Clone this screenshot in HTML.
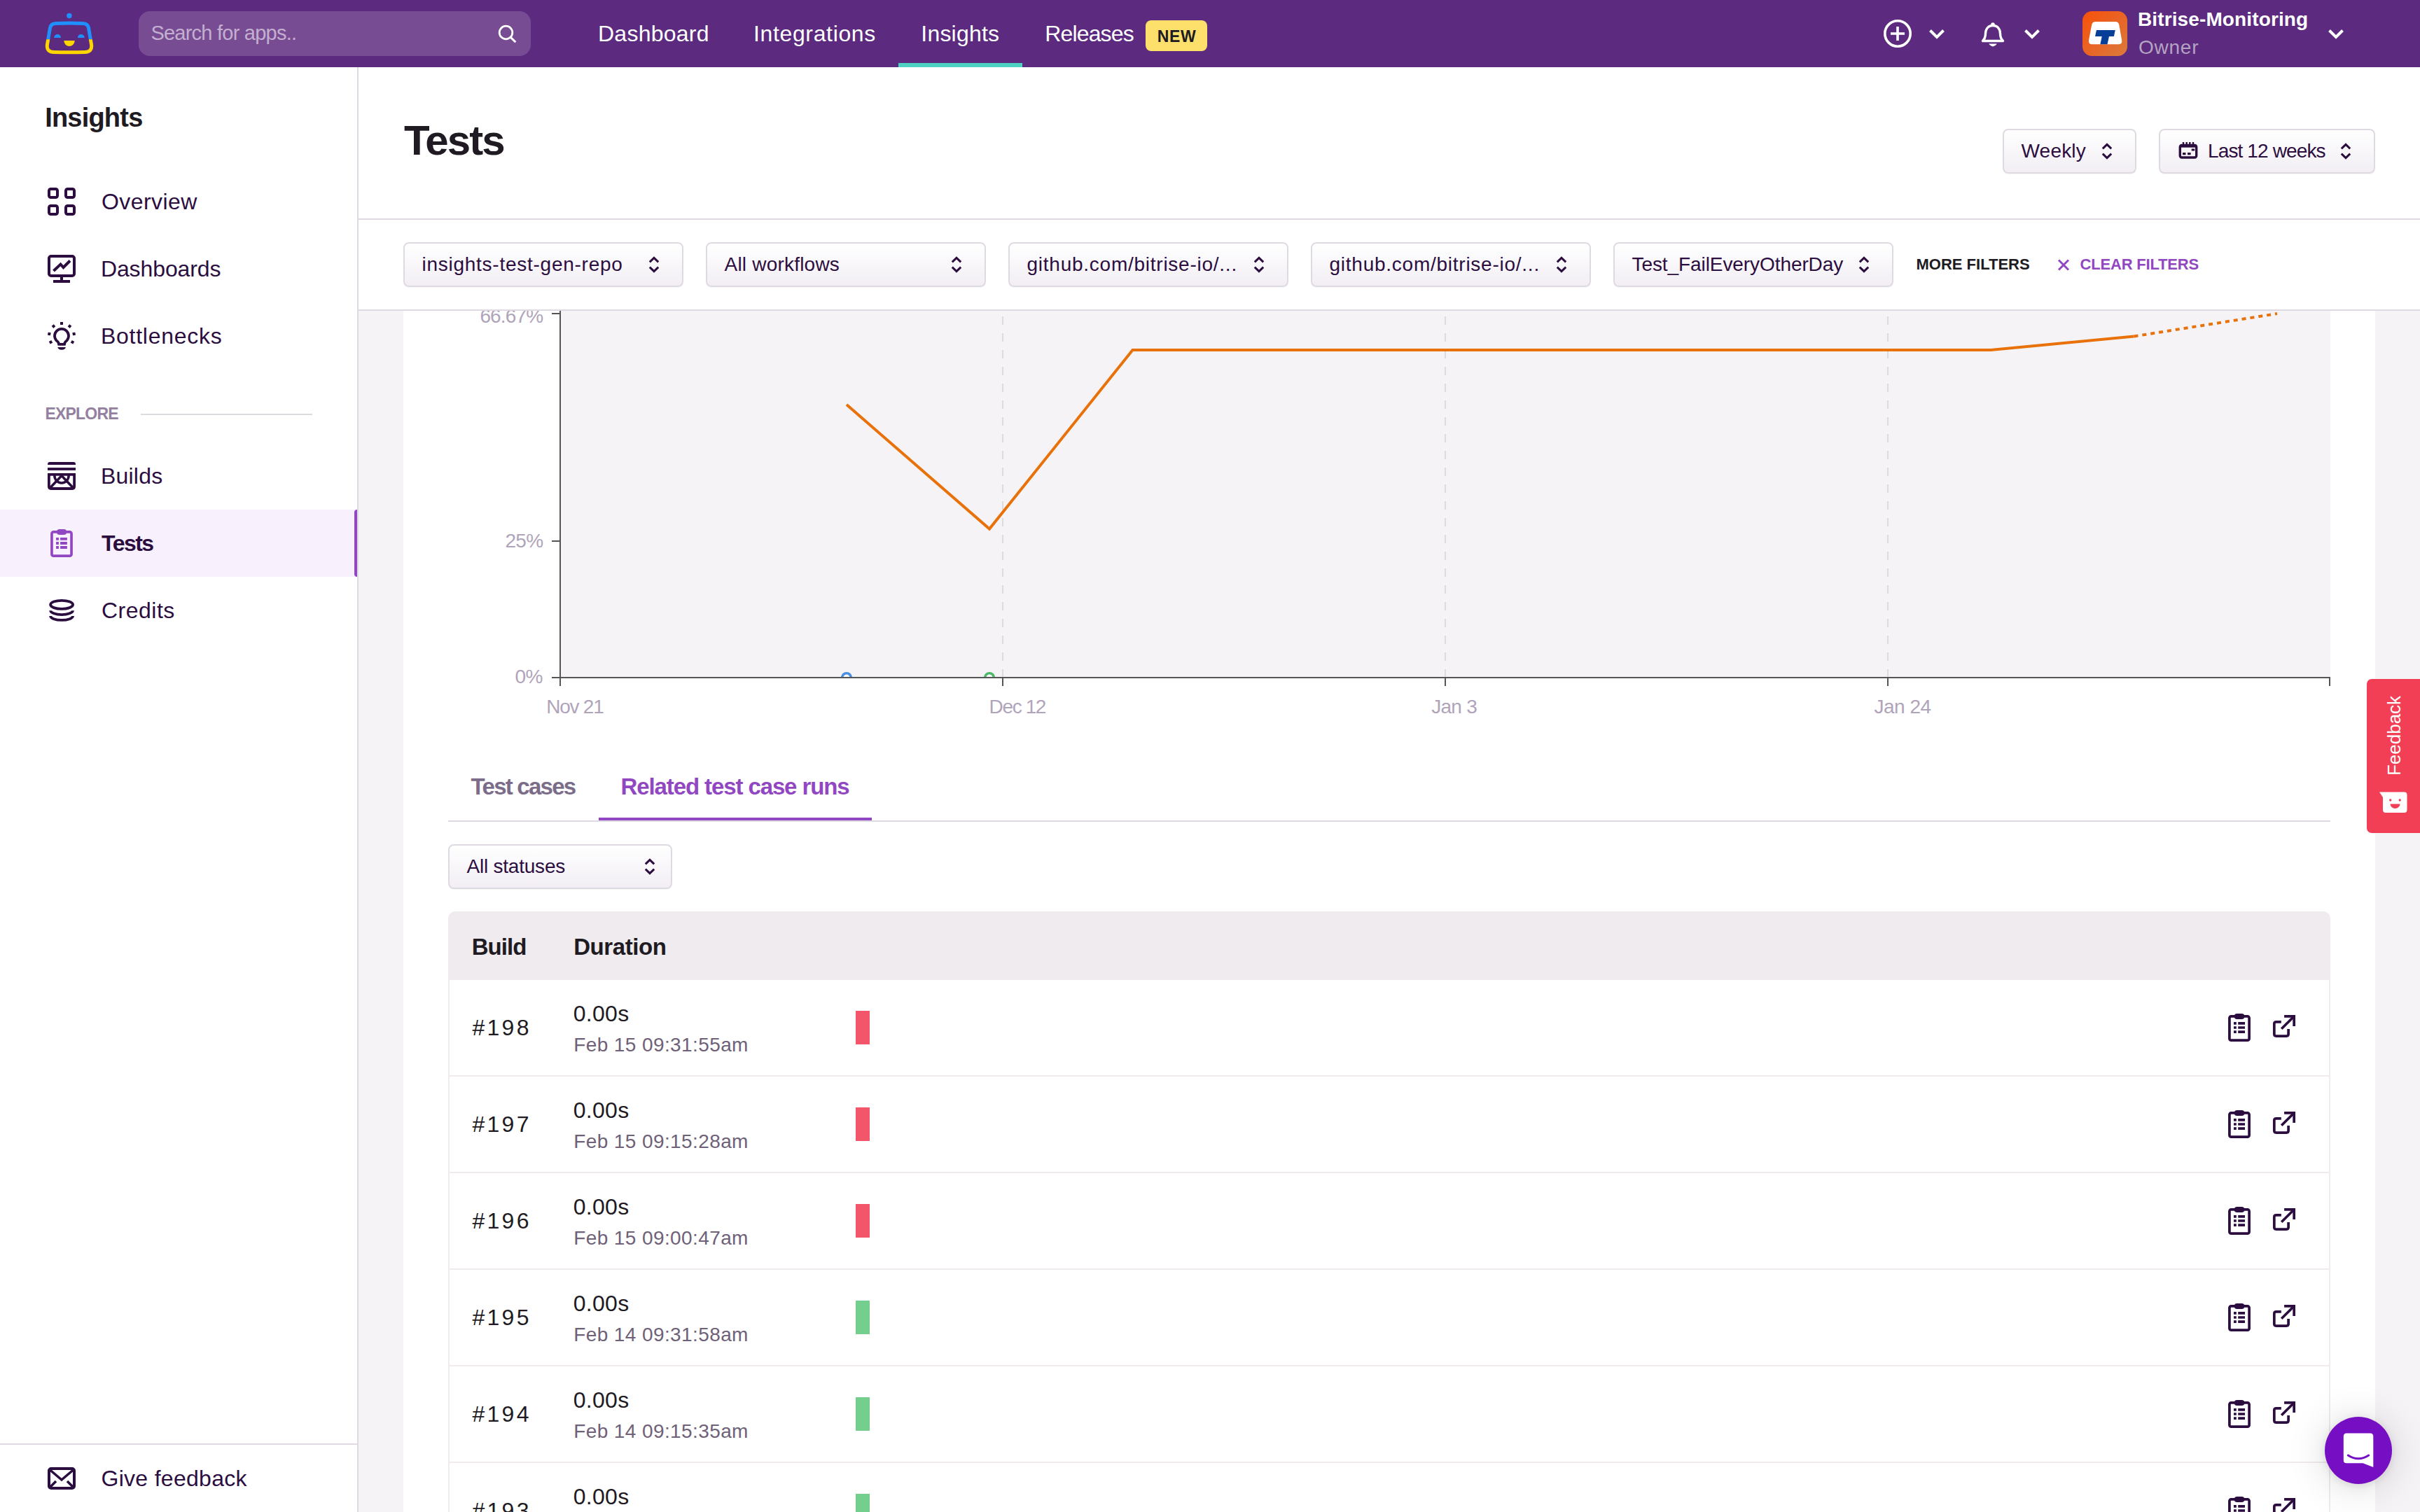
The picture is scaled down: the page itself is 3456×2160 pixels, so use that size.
<!DOCTYPE html>
<html lang="en">
<head>
<meta charset="utf-8">
<title>Tests - Insights</title>
<style>
*{box-sizing:border-box;margin:0;padding:0}
html,body{width:3456px;height:2160px;overflow:hidden;background:#fff}
body{font-family:"Liberation Sans",sans-serif;color:#2b0e3f;position:relative;-webkit-font-smoothing:antialiased}
.abs{position:absolute}
svg{display:block;overflow:visible}
.t{position:absolute;white-space:nowrap;line-height:1}

/* header */
#hdr{position:absolute;left:0;top:0;width:3456px;height:96px;background:#5c2a7e}
#search{position:absolute;left:198px;top:16px;width:560px;height:64px;border-radius:16px;background:#784c93}
.nav{color:#fff;font-size:32px}

/* sidebar */
#side{position:absolute;left:0;top:96px;width:512px;height:2064px;background:#fff;border-right:2px solid #dfdae1}
.sitem{font-size:32px;color:#2b0e3f;left:145px}
#active{position:absolute;left:0;top:632px;width:510px;height:96px;background:#f8f0fd}
#activebar{position:absolute;left:506px;top:632px;width:4px;height:96px;background:#9247c2;border-radius:4px 0 0 4px}

/* main */
#titlebar{position:absolute;left:512px;top:96px;width:2944px;height:218px;background:#fff;border-bottom:2px solid #dfdae1}
#filterbar{position:absolute;left:512px;top:314px;width:2944px;height:130px;background:#fff;border-bottom:2px solid #dfdae1}
#scroll{position:absolute;left:512px;top:444px;width:2944px;height:1716px;background:#f5f3f6;overflow:hidden}
#card{position:absolute;left:64px;top:0;width:2816px;height:1716px;background:#fff}

.sel{position:absolute;height:64px;border:2px solid #dfdae1;border-radius:8px;background:linear-gradient(#ffffff,#f2eef4);font-size:28px;color:#2b0e3f;box-shadow:0 1px 1px rgba(43,14,63,.04)}
.sel .t{top:16.4px;left:24.5px}
.sel svg.chev{position:absolute;top:18px;right:32px}

#pg{position:absolute;left:-576px;top:-444px;width:3456px;height:2160px}
.ax{font-size:28px;color:#b0a4ba}
.tab{font-size:32px;font-weight:bold}
.th{font-size:32px;font-weight:bold;color:#201b22}
.row{position:absolute;left:642px;width:2684px;height:138px;border-bottom:2px solid #efebef}
.row .bno{left:32.4px;top:52.3px;font-size:32px;color:#201b22;letter-spacing:3.3px}
.row .dur{left:176.8px;top:31.7px;font-size:32px;color:#201b22;letter-spacing:.28px}
.row .dat{left:177.2px;top:78.8px;font-size:28px;color:#6e6178;letter-spacing:.4px}
.row .bar{position:absolute;left:580px;top:44px;width:20px;height:48px}
.row .ic1{left:2539px;top:47px}
.row .ic2{left:2603px;top:49px}
</style>
</head>
<body>

<svg width="0" height="0" style="position:absolute">
  <defs>
    <g id="i-clip" fill="none" stroke="#2b0e3f" stroke-width="3.700">
      <rect x="2.900" y="4.800" width="28.200" height="34.300" rx="2.400"/>
      <rect x="9.700" y="0.900" width="14.700" height="8" rx="4" fill="#2b0e3f" stroke="none"/>
      <path d="M9 14.850 H12.800 M15.200 14.850 H25 M9 21 H12.800 M15.200 21 H25 M9 27.100 H12.800 M15.200 27.100 H25"/>
    </g>
    <path id="i-chev" fill="none" stroke="#2b0e3f" stroke-width="3" d="M1.800 8.300 L8 2.300 L14.200 8.300 M1.800 15.700 L8 21.700 L14.200 15.700"/>
    <g id="i-ext" fill="none" stroke="#2b0e3f" stroke-width="3.700">
      <path d="M12.800 10.800 H5.600 Q2.800 10.800 2.800 13.600 V28.300 Q2.800 31.100 5.600 31.100 H20.300 Q23.100 31.100 23.100 28.300 V20.900"/>
      <path d="M13.200 20.800 L30.500 3.500"/>
      <path d="M17.100 2.850 H31.150 V16.900"/>
    </g>
  </defs>
</svg>

<!-- ================= HEADER ================= -->
<div id="hdr">
  <svg class="abs" style="left:60px;top:14px" width="80" height="68" viewBox="60 14 80 68">
    <defs>
      <clipPath id="ctop"><rect x="60" y="14" width="80" height="42.200"/></clipPath>
      <clipPath id="cbot"><rect x="60" y="56.200" width="80" height="30"/></clipPath>
    </defs>
    <path id="robot" d="M79.500 33.400 Q99 32.600 118.500 33.400 C123.400 33.600 125.700 35.600 126.500 39.800 L130.500 63.300 C131.700 70.800 128.300 74.300 121 74.500 Q99 75.100 77 74.500 C69.700 74.300 66.300 70.800 67.500 63.300 L71.500 39.800 C72.300 35.600 74.600 33.600 79.500 33.400 Z" fill="none" stroke="#1e90ff" stroke-width="5" clip-path="url(#ctop)"/>
    <path d="M79.500 33.400 Q99 32.600 118.500 33.400 C123.400 33.600 125.700 35.600 126.500 39.800 L130.500 63.300 C131.700 70.800 128.300 74.300 121 74.500 Q99 75.100 77 74.500 C69.700 74.300 66.300 70.800 67.500 63.300 L71.500 39.800 C72.300 35.600 74.600 33.600 79.500 33.400 Z" fill="none" stroke="#ffd500" stroke-width="5" clip-path="url(#cbot)"/>
    <circle cx="98.900" cy="22.500" r="3.700" fill="#1e90ff"/>
    <path d="M77.200 54.100 A4.900 5 0 0 1 87 54.100 Z" fill="#1e90ff"/>
    <path d="M110.900 54.100 A4.900 5 0 0 1 120.700 54.100 Z" fill="#1e90ff"/>
    <path d="M91.300 58.100 H106.700 A7.700 8 0 0 1 91.300 58.100 Z" fill="#ffd500"/>
  </svg>
  <div id="search">
    <div id="t01" class="t" style="left:17.4px;top:17px;font-size:29px;color:#c3afd0;letter-spacing:-0.76px">Search for apps..</div>
    <svg class="abs" style="left:512px;top:19px" width="28" height="28" viewBox="0 0 28 28" fill="none" stroke="#fff" stroke-width="2.800" stroke-linecap="butt">
      <circle cx="12.500" cy="11.500" r="9.300"/><path d="M19.100 18.100 L26.300 25.300" stroke-width="3"/>
    </svg>
  </div>
  <div id="t02" class="t nav" style="left:854px;top:32.4px;font-size:32px;letter-spacing:0.25px">Dashboard</div>
  <div id="t03" class="t nav" style="left:1076px;top:32.4px;font-size:32px;letter-spacing:0.64px">Integrations</div>
  <div id="t04" class="t nav" style="left:1315.3px;top:32.4px;font-size:32px;letter-spacing:0.21px">Insights</div>
  <div class="abs" style="left:1283px;top:90px;width:177px;height:6px;background:#4ed1c1"></div>
  <div id="t05" class="t nav" style="left:1492.3px;top:32.4px;font-size:32px;letter-spacing:-0.86px">Releases</div>
  <div class="abs" style="left:1636px;top:29px;width:88px;height:44px;border-radius:8px;background:#fde06c"></div>
  <div id="t06" class="t" style="left:1652.8px;top:40.5px;font-size:23px;font-weight:bold;color:#201b22;letter-spacing:0.60px">NEW</div>

  <!-- plus -->
  <svg class="abs" style="left:2688px;top:26px" width="44" height="44" viewBox="0 0 44 44" fill="none" stroke="#fff" stroke-width="3.6">
    <circle cx="22" cy="22" r="18.200"/><path d="M22 12 V32 M12 22 H32"/>
  </svg>
  <svg class="abs" style="left:2753px;top:40px" width="26" height="18" viewBox="0 0 26 18" fill="none" stroke="#fff" stroke-width="4"><path d="M3.500 3.500 L13 13 L22.500 3.500"/></svg>
  <!-- bell -->
  <svg class="abs" style="left:2826px;top:28.700px" width="40" height="40" viewBox="0 0 40 40" fill="none" stroke="#fff" stroke-width="3.4" stroke-linejoin="round">
    <path d="M20 7.500 C13 7.500 9.500 13 9.500 19 C9.500 24 8 27 5.500 29.500 H34.500 C32 27 30.500 24 30.500 19 C30.500 13 27 7.500 20 7.500 Z"/>
    <circle cx="20" cy="6" r="1.800" fill="#fff" stroke-width="2"/>
    <path d="M14.200 33.600 Q20 41.200 25.800 33.600 Z" fill="#fff" stroke="none"/>
  </svg>
  <svg class="abs" style="left:2889px;top:40px" width="26" height="18" viewBox="0 0 26 18" fill="none" stroke="#fff" stroke-width="4"><path d="M3.500 3.500 L13 13 L22.500 3.500"/></svg>
  <!-- avatar -->
  <svg class="abs" style="left:2974px;top:16px" width="64" height="64" viewBox="0 0 64 64">
    <defs><linearGradient id="avg" x1="0" y1="0" x2="1" y2="1"><stop offset="0" stop-color="#f7520a"/><stop offset="0.5" stop-color="#e96424"/><stop offset="1" stop-color="#da7b3c"/></linearGradient></defs>
    <rect width="64" height="64" rx="13.500" fill="url(#avg)"/>
    <path d="M18.500 15 H47 Q51.500 15 52.300 19.500 L56.200 41.500 Q57 47.300 51.500 47.300 H13.700 Q8.200 47.300 9 41.500 L13.200 19.500 Q14 15 18.500 15 Z" fill="#fff"/>
    <g transform="skewX(-12)" fill="#073e97"><rect x="25.700" y="27" width="26.800" height="8.900"/><rect x="35.400" y="35.500" width="10.200" height="11.800"/></g>
  </svg>
  <div id="t07" class="t" style="left:3053px;top:14.2px;font-size:28px;font-weight:bold;color:#fff;letter-spacing:0.12px">Bitrise-Monitoring</div>
  <div id="t08" class="t" style="left:3054px;top:54px;font-size:28px;color:#b5a3c4;letter-spacing:0.75px">Owner</div>
  <svg class="abs" style="left:3323px;top:40px" width="26" height="18" viewBox="0 0 26 18" fill="none" stroke="#fff" stroke-width="4"><path d="M3.500 3.500 L13 13 L22.500 3.500"/></svg>
</div>

<!-- ================= SIDEBAR ================= -->
<div id="side">
  <div id="t09" class="t" style="left:64.2px;top:53.2px;font-size:38px;font-weight:bold;color:#201b22;letter-spacing:-0.80px">Insights</div>
  <div id="active"></div><div id="activebar"></div>

  <svg class="abs" style="left:0;top:0" width="512" height="2064" viewBox="0 96 512 2064" fill="none" stroke="#2b0e3f" stroke-width="4">
    <!-- overview -->
    <g><rect x="70" y="270" width="12" height="12" rx="2.500"/><rect x="94" y="270" width="12" height="12" rx="2.500"/><rect x="70" y="294" width="12" height="12" rx="2.500"/><rect x="94" y="294" width="12" height="12" rx="2.500"/></g>
    <!-- dashboards -->
    <g><rect x="70" y="366" width="36" height="28" rx="3"/><path d="M88 396 V402 M76 402 H100"/><path d="M76.500 387 L86.500 377.500 L90.500 382 L100 372.500" stroke-linejoin="miter"/></g>
    <!-- bottlenecks -->
    <g><path d="M83.900 491.900 H92.200 V490.800 Q92.400 488.600 95.660 486.230 A10 10 0 1 0 80.340 486.230 Q83.700 488.600 83.900 490.800 Z" stroke-width="3.800" stroke-linejoin="round"/>
       <path d="M82.300 496 H93.900 Q93 499.800 88.100 499.800 Q83.200 499.800 82.300 496 Z" fill="#2b0e3f" stroke="none"/>
       <path d="M88.00 463.90 L88.00 459.90 M98.22 467.62 L100.79 464.56 M103.70 477.31 L107.65 476.69 M101.77 487.75 L105.23 489.75 M77.78 467.62 L75.21 464.56 M72.30 477.31 L68.35 476.69 M74.23 487.75 L70.77 489.75" stroke-width="4"/></g>
    <!-- builds -->
    <g><path d="M68.100 664 V663.100 Q68.100 660.100 71.100 660.100 H105 Q108 660.100 108 663.100 V664 Z" fill="#2b0e3f" stroke="none"/><rect x="68" y="668.100" width="40" height="3.800" fill="#2b0e3f" stroke="none"/>
       <path d="M69.900 676 V695 Q69.900 698 72.900 698 H103.100 Q106.100 698 106.100 695 V676 M68 677.900 H108" stroke-width="3.800"/>
       <path d="M71.500 697 L88 679.500 L104.500 697" stroke-width="3.600" stroke-linejoin="miter"/><path d="M77.800 679 A10.200 11 0 0 0 98.200 679" stroke-width="3.500"/></g>
    <!-- tests (active) -->
    <g stroke="#9247c2" stroke-width="3.700"><rect x="73.950" y="759.850" width="28.100" height="34.300" rx="2.400"/><rect x="81" y="756.100" width="14.200" height="7.800" rx="3.900" fill="#9247c2" stroke="none"/>
       <path d="M80.100 769.950 H83.900 M86.100 769.950 H95.900 M80.100 776 H83.900 M86.100 776 H95.900 M80.100 782 H83.900 M86.100 782 H95.900" stroke-width="3.800"/></g>
    <!-- credits -->
    <g stroke-width="3.800"><clipPath id="cr1"><rect x="60" y="872.200" width="60" height="12"/></clipPath><clipPath id="cr2"><rect x="60" y="880" width="60" height="12"/></clipPath>
       <ellipse cx="88.100" cy="863.850" rx="16" ry="6.050"/><ellipse cx="88.100" cy="872.050" rx="16" ry="6.050" clip-path="url(#cr1)"/><ellipse cx="88.100" cy="879.900" rx="16" ry="6.050" clip-path="url(#cr2)"/></g>
    <!-- feedback envelope -->
    <g><rect x="70" y="2098" width="36" height="28" rx="3"/><path d="M71.500 2100 L88 2114 L104.500 2100" stroke-width="3.600"/><path d="M71.500 2124.500 L80 2116 M104.500 2124.500 L96 2116" stroke-width="3.600"/></g>
  </svg>

  <div id="t10" class="t sitem" style="top:176px;font-size:32px;letter-spacing:0.44px;left:144.9px">Overview</div>
  <div id="t11" class="t sitem" style="top:272px;font-size:32px;letter-spacing:-0.10px;left:143.9px">Dashboards</div>
  <div id="t12" class="t sitem" style="top:368.2px;font-size:32px;letter-spacing:0.75px;left:143.9px">Bottlenecks</div>
  <div id="t13" class="t" style="left:64.5px;top:483.7px;font-size:23px;font-weight:bold;color:#93819f;letter-spacing:-0.80px">EXPLORE</div>
  <div class="abs" style="left:201px;top:495px;width:245px;height:2px;background:#dfdae1"></div>
  <div id="t14" class="t sitem" style="top:568.4px;font-size:32px;letter-spacing:0.22px;left:143.9px">Builds</div>
  <div id="t15" class="t sitem" style="top:664px;font-weight:bold;font-size:32px;letter-spacing:-1.52px;left:145px">Tests</div>
  <div id="t16" class="t sitem" style="top:760px;font-size:32px;letter-spacing:0.52px;left:144.9px">Credits</div>

  <div class="abs" style="left:0;top:1966px;width:510px;height:2px;background:#dfdae1"></div>
  <div id="t17" class="t sitem" style="top:1999.7px;font-size:32px;letter-spacing:0.29px;left:144.5px">Give feedback</div>
</div>

<!-- ================= TITLE BAR ================= -->
<div id="titlebar">
  <div id="t18" class="t" style="left:65px;top:74.7px;font-size:60px;font-weight:bold;color:#201b22;letter-spacing:-1.93px">Tests</div>
  <div class="sel" style="left:2348px;top:88px;width:191px"><div id="t19" class="t" style="font-size:28px;letter-spacing:0.20px">Weekly</div><svg class="chev" width="16" height="24"><use href="#i-chev"/></svg></div>
  <div class="sel" style="left:2571px;top:88px;width:309px"><svg class="abs" style="left:25px;top:16px" width="30" height="28" viewBox="3110 202 30 28" fill="none" stroke="#2b0e3f" stroke-width="3.400"><rect x="3113.300" y="207.500" width="23.400" height="17.500" rx="2.500"/><path d="M3113.300 208.600 H3136.700" stroke-width="4.200"/><path d="M3118 203 V208 M3122.700 203 V208 M3127.300 203 V208 M3132 203 V208" stroke-width="2.400"/><path d="M3129.700 214 H3134.200 M3117 219.600 H3121.500 M3124 219.600 H3128.600" stroke-width="3.200"/></svg><div id="t20" class="t" style="left:68px;font-size:28px;letter-spacing:-0.87px">Last 12 weeks</div><svg class="chev" width="16" height="24"><use href="#i-chev"/></svg></div>
</div>

<!-- ================= FILTER BAR ================= -->
<div id="filterbar">
  <div class="sel" style="left:64px;top:32px;width:400px"><div id="t21" class="t" style="font-size:28px;letter-spacing:0.74px">insights-test-gen-repo</div><svg class="chev" width="16" height="24"><use href="#i-chev"/></svg></div>
  <div class="sel" style="left:496px;top:32px;width:400px"><div id="t22" class="t" style="font-size:28px;letter-spacing:0.21px">All workflows</div><svg class="chev" width="16" height="24"><use href="#i-chev"/></svg></div>
  <div class="sel" style="left:928px;top:32px;width:400px"><div id="t23" class="t" style="font-size:28px;letter-spacing:0.75px">github.com/bitrise-io/...</div><svg class="chev" width="16" height="24"><use href="#i-chev"/></svg></div>
  <div class="sel" style="left:1360px;top:32px;width:400px"><div id="t24" class="t" style="font-size:28px;letter-spacing:0.75px">github.com/bitrise-io/...</div><svg class="chev" width="16" height="24"><use href="#i-chev"/></svg></div>
  <div class="sel" style="left:1792px;top:32px;width:400px"><div id="t25" class="t" style="font-size:28px;letter-spacing:-0.08px">Test_FailEveryOtherDay</div><svg class="chev" width="16" height="24"><use href="#i-chev"/></svg></div>
  <div id="t26" class="t" style="left:2224.5px;top:53px;font-size:22px;font-weight:bold;color:#201b22">MORE FILTERS</div>
<svg class="abs" style="left:2425px;top:54px" width="20" height="20" viewBox="0 0 20 20" fill="none" stroke="#9247c2" stroke-width="3"><path d="M3 3.500 L17 17.500 M17 3.500 L3 17.500"/></svg>
  <div id="t27" class="t" style="left:2458.5px;top:53px;font-size:22px;font-weight:bold;color:#9247c2;letter-spacing:-0.19px">CLEAR FILTERS</div>
</div>

<!-- ================= SCROLL AREA ================= -->
<div id="scroll">
  <div id="card">
  <div id="pg">
    <!-- chart -->
    <svg class="abs" style="left:576px;top:444px" width="2816" height="640" viewBox="576 444 2816 640">
      <defs><clipPath id="plotclip"><rect x="800" y="444" width="2528" height="523"/></clipPath></defs>
      <rect x="800" y="444" width="2528" height="524" fill="#f5f3f6"/>
      <g stroke="#dcdcdc" stroke-width="2" stroke-dasharray="12 12">
        <path d="M1432 968 V444"/><path d="M2064 968 V444"/><path d="M2696 968 V444"/>
      </g>
      <g clip-path="url(#plotclip)" fill="#fff" stroke-width="3.6">
        <circle cx="1209" cy="968" r="6.300" stroke="#4a90e2"/>
        <circle cx="1413" cy="968" r="6.300" stroke="#4cb86a"/>
      </g>
      <g stroke="#555" stroke-width="2" fill="none">
        <path d="M800 444 V980"/>
        <path d="M788 968 H3328"/>
        <path d="M1432 968 V980 M2064 968 V980 M2696 968 V980 M3327 968 V980"/>
        <path d="M788 448 H800 M788 773 H800"/>
      </g>
      <g fill="none" stroke="#e8710a" stroke-width="4" stroke-linejoin="miter">
        <path d="M1209 578 L1413 755.600 L1617.500 500 L2843 500 L3047.500 480.500"/>
        <path d="M3047.500 480.500 L3252 448" stroke-dasharray="6 6"/>
      </g>
    </svg>

    <div id="c1" class="t ax" style="left:685.4px;top:438px;font-size:28px;letter-spacing:-0.86px">66.67%</div>
    <div id="c2" class="t ax" style="left:721.6px;top:758.6px;font-size:28px;letter-spacing:-0.80px">25%</div>
    <div id="c3" class="t ax" style="left:735.4px;top:953px;font-size:28px;letter-spacing:-0.40px">0%</div>
    <div id="c4" class="t ax" style="left:780.3px;top:996px;font-size:28px;letter-spacing:-1.26px">Nov 21</div>
    <div id="c5" class="t ax" style="left:1412.6px;top:996px;font-size:28px;letter-spacing:-1.38px">Dec 12</div>
    <div id="c6" class="t ax" style="left:2044.2px;top:996px;font-size:28px;letter-spacing:-0.72px">Jan 3</div>
    <div id="c7" class="t ax" style="left:2676.5px;top:996px;font-size:28px;letter-spacing:-0.48px">Jan 24</div>
    <!-- tabs -->
    <div id="t28" class="t tab" style="left:672.6px;top:1107.4px;color:#7b6c89;font-size:33px;letter-spacing:-1.76px">Test cases</div>
    <div id="t29" class="t tab" style="left:886.6px;top:1107.4px;color:#9247c2;font-size:33px;letter-spacing:-1.11px">Related test case runs</div>
    <div class="abs" style="left:640px;top:1172px;width:2688px;height:2px;background:#dfdae1"></div>
    <div class="abs" style="left:855px;top:1168px;width:390px;height:4px;background:#9247c2"></div>

    <div class="sel" style="left:640px;top:1206px;width:320px"><div id="t30" class="t" style="font-size:28px;letter-spacing:-0.22px">All statuses</div><svg class="chev" style="right:22px" width="16" height="24"><use href="#i-chev"/></svg></div>

    <!-- table -->
    <div class="abs" style="left:640px;top:1302px;width:2688px;height:98px;background:#efebef;border-radius:10px 10px 0 0"></div>
    <div id="t31" class="t th" style="left:673.7px;top:1335.5px;font-size:33px;letter-spacing:-0.93px">Build</div>
    <div id="t32" class="t th" style="left:819.2px;top:1335.5px;font-size:33px;letter-spacing:-0.43px">Duration</div>
    <div class="abs" style="left:640px;top:1400px;width:2px;height:800px;background:#efebef"></div>
    <div class="abs" style="left:3326px;top:1400px;width:2px;height:800px;background:#efebef"></div>
    <div class="row" style="top:1400px">
      <div id="t33" class="t bno">#198</div>
      <div id="t34" class="t dur">0.00s</div>
      <div id="t35" class="t dat">Feb 15 09:31:55am</div>
      <div class="bar" style="background:#f2566b"></div>
      <svg class="abs ic1" width="34" height="42" viewBox="0 0 34 42"><use href="#i-clip"/></svg>
      <svg class="abs ic2" width="34" height="34" viewBox="0 0 34 34"><use href="#i-ext"/></svg>
    </div>
    <div class="row" style="top:1538px">
      <div id="t36" class="t bno">#197</div>
      <div id="t37" class="t dur">0.00s</div>
      <div id="t38" class="t dat">Feb 15 09:15:28am</div>
      <div class="bar" style="background:#f2566b"></div>
      <svg class="abs ic1" width="34" height="42" viewBox="0 0 34 42"><use href="#i-clip"/></svg>
      <svg class="abs ic2" width="34" height="34" viewBox="0 0 34 34"><use href="#i-ext"/></svg>
    </div>
    <div class="row" style="top:1676px">
      <div id="t39" class="t bno">#196</div>
      <div id="t40" class="t dur">0.00s</div>
      <div id="t41" class="t dat">Feb 15 09:00:47am</div>
      <div class="bar" style="background:#f2566b"></div>
      <svg class="abs ic1" width="34" height="42" viewBox="0 0 34 42"><use href="#i-clip"/></svg>
      <svg class="abs ic2" width="34" height="34" viewBox="0 0 34 34"><use href="#i-ext"/></svg>
    </div>
    <div class="row" style="top:1814px">
      <div id="t42" class="t bno">#195</div>
      <div id="t43" class="t dur">0.00s</div>
      <div id="t44" class="t dat">Feb 14 09:31:58am</div>
      <div class="bar" style="background:#74cf8f"></div>
      <svg class="abs ic1" width="34" height="42" viewBox="0 0 34 42"><use href="#i-clip"/></svg>
      <svg class="abs ic2" width="34" height="34" viewBox="0 0 34 34"><use href="#i-ext"/></svg>
    </div>
    <div class="row" style="top:1952px">
      <div id="t45" class="t bno">#194</div>
      <div id="t46" class="t dur">0.00s</div>
      <div id="t47" class="t dat">Feb 14 09:15:35am</div>
      <div class="bar" style="background:#74cf8f"></div>
      <svg class="abs ic1" width="34" height="42" viewBox="0 0 34 42"><use href="#i-clip"/></svg>
      <svg class="abs ic2" width="34" height="34" viewBox="0 0 34 34"><use href="#i-ext"/></svg>
    </div>
    <div class="row" style="top:2090px">
      <div id="t48" class="t bno">#193</div>
      <div id="t49" class="t dur">0.00s</div>
      <div id="t50" class="t dat">Feb 14 09:00:44am</div>
      <div class="bar" style="background:#74cf8f"></div>
      <svg class="abs ic1" width="34" height="42" viewBox="0 0 34 42"><use href="#i-clip"/></svg>
      <svg class="abs ic2" width="34" height="34" viewBox="0 0 34 34"><use href="#i-ext"/></svg>
    </div>
  </div>
  </div>
</div>

<!-- feedback tab -->
<div class="abs" style="left:3380px;top:970px;width:80px;height:220px;background:#f23f55;border-radius:7px 0 0 7px"></div>
<div id="t51" class="t" style="left:3419px;top:1051px;width:0;height:0"><div style="position:absolute;left:0;top:0;transform:translate(-50%,-50%) rotate(-90deg);font-size:26px;color:#fff;white-space:nowrap;line-height:1">Feedback</div></div>
<svg class="abs" style="left:3396px;top:1130px" width="44" height="34" viewBox="3396 1130 44 34">
  <path d="M3398 1131.500 H3433.500 Q3437.500 1131.500 3437.500 1135.500 V1157 Q3437.500 1161 3433.500 1161 H3407 Q3403 1161 3403 1157 V1139 Z" fill="#fff"/>
  <circle cx="3413.700" cy="1143" r="1.700" fill="#f23f55"/><circle cx="3427.200" cy="1143" r="1.700" fill="#f23f55"/>
  <path d="M3413.500 1148.500 H3427.500 A7 6.500 0 0 1 3413.500 1148.500 Z" fill="#f23f55"/>
</svg>
<!-- chat bubble -->
<div class="abs" style="left:3320px;top:2024px;width:96px;height:96px;border-radius:50%;background:#760fc3;box-shadow:0 2px 12px rgba(0,0,0,.10),0 4px 56px rgba(0,0,0,.16)"></div>
<svg class="abs" style="left:3340px;top:2040px" width="56" height="64" viewBox="3340 2040 56 64">
  <path d="M3351 2047.500 H3385 Q3389.300 2047.500 3389.300 2052 V2096 L3374.500 2090.300 H3351 Q3346.800 2090.300 3346.800 2086 V2052 Q3346.800 2047.500 3351 2047.500 Z" fill="#fff"/>
  <path d="M3353.300 2079 Q3368 2088.600 3382.700 2079" fill="none" stroke="#760fc3" stroke-width="3" stroke-linecap="round"/>
</svg>

</body>
</html>
